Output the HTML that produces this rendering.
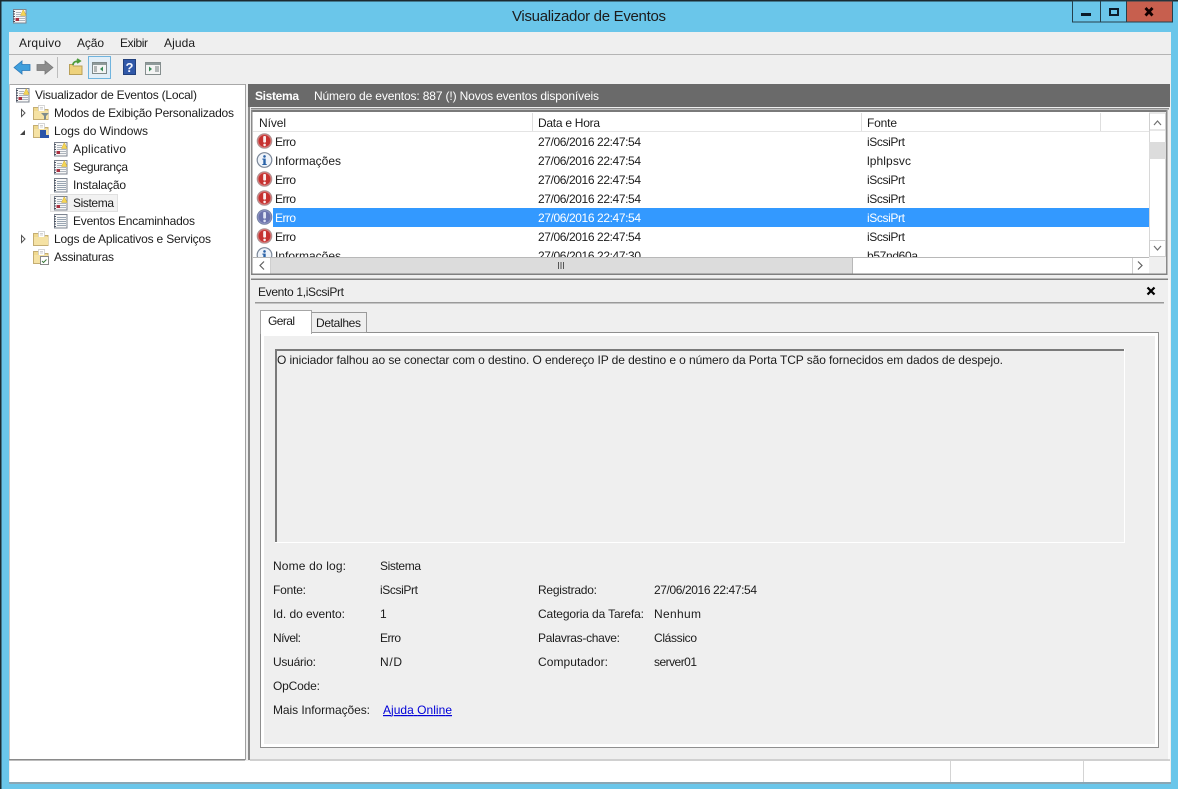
<!DOCTYPE html>
<html lang="pt"><head><meta charset="utf-8"><title>Visualizador de Eventos</title>
<style>
html,body{margin:0;padding:0;width:1178px;height:789px;overflow:hidden;background:#6ac6ea}
svg{display:block}
text{font-family:"Liberation Sans",sans-serif;font-size:12px;fill:#1c1c1c}
</style></head><body>
<svg xmlns="http://www.w3.org/2000/svg" width="1178" height="789" viewBox="0 0 1178 789">
<defs>
<clipPath id="lc"><rect x="253" y="132" width="896" height="125"/></clipPath>
<g id="err"><circle cx="8" cy="8" r="7.400" fill="#d27a7a" stroke="#a99a9a" stroke-width=".8"/><circle cx="8" cy="8" r="5.900" fill="#c63230"/><rect x="6.700" y="3" width="2.800" height="6.600" rx="1" fill="#fbeeee"/><rect x="6.800" y="10.600" width="2.600" height="2.600" rx="1.200" fill="#fbeeee"/></g>
<g id="sel"><circle cx="8" cy="8" r="7.400" fill="#8d92c0" stroke="#6f7f9f" stroke-width=".8"/><circle cx="8" cy="8" r="5.900" fill="#6a72ac"/><rect x="6.700" y="3" width="2.800" height="6.600" rx="1" fill="#dfe4f4"/><rect x="6.800" y="10.600" width="2.600" height="2.600" rx="1.200" fill="#dfe4f4"/></g>
<g id="inf"><circle cx="8" cy="8" r="7.300" fill="#eef3fa" stroke="#7b8798" stroke-width="1.200"/><circle cx="8" cy="4.400" r="1.300" fill="#2a62a8"/><rect x="6.800" y="6.600" width="2.400" height="6" fill="#2a62a8"/><rect x="5.800" y="6.600" width="2" height="1" fill="#2a62a8"/><rect x="5.800" y="12" width="4.400" height="1" fill="#2a62a8"/></g>
<g id="log"><rect x="1.500" y="1.500" width="12.500" height="13.500" fill="#f7f7f7" stroke="#7d8490"/><path d="M1 3.500h2M1 6h2M1 8.500h2M1 11h2M1 13.500h2" stroke="#4a5260"/><path d="M4 4.500h5M4 6.500h5M4 8.500h9M4 10.500h9M4 12.500h9" stroke="#adb5bd"/><path d="M8.500 7.500l2.800-6 2.800 6z" fill="#f4d655" stroke="#d0ac38" stroke-width=".5"/><rect x="3.500" y="10" width="3.500" height="3" fill="#a83040"/></g>
<g id="plain"><rect x="1.500" y="1.500" width="12.500" height="13.500" fill="#f7f7f7" stroke="#7d8490"/><path d="M1 3.500h2M1 6h2M1 8.500h2M1 11h2M1 13.500h2" stroke="#4a5260"/><path d="M4 4.500h9M4 6.500h9M4 8.500h9M4 10.500h9M4 12.500h9" stroke="#99a5b2"/></g>
<g id="fold"><path d="M.5 14.500V2.500h5l1.500 2h8v10z" fill="#f0d98e" stroke="#c4ad72"/><path d="M5.500 .5h6v6h-6z" fill="#fff" stroke="#c8c8c8" stroke-width=".7"/><path d="M7 2.500h3M7 4h3" stroke="#c4c4c4" stroke-width=".7"/><rect x="1" y="6" width="14" height="8" fill="#f5e2a4"/></g>
</defs>

<!-- frame -->
<rect width="1178" height="789" fill="#6ac6ea"/>
<rect width="1178" height="1.500" fill="#1c2a30"/>
<rect width="1.500" height="789" fill="#1c2a30"/>
<text x="512" y="21" textLength="154" style="font-size:15px">Visualizador de Eventos</text>
<g transform="translate(12,8)"><use href="#log"/></g>

<!-- caption buttons -->
<rect x="1072.500" y="1" width="28" height="21" fill="#6ac6ea" stroke="#25404c"/>
<rect x="1100.500" y="1" width="26" height="21" fill="#6ac6ea" stroke="#25404c"/>
<rect x="1126.500" y="1" width="46" height="21" fill="#c75f4e" stroke="#25404c"/>
<rect x="1081" y="13" width="10" height="3" fill="#0c1c2a"/>
<rect x="1110" y="9" width="8" height="6" fill="none" stroke="#0c1c2a" stroke-width="2"/>
<path d="M1145.500 8l7 7.500M1152.500 8l-7 7.500" stroke="#100" stroke-width="2.800"/>

<!-- client -->
<rect x="9" y="32" width="1162" height="751" fill="#efefef"/>
<rect x="9" y="54" width="1162" height="1" fill="#b4b4b4"/>
<text x="19" y="47" textLength="42">Arquivo</text>
<text x="77" y="47" textLength="27">Ação</text>
<text x="120" y="47" textLength="28">Exibir</text>
<text x="164" y="47" textLength="31">Ajuda</text>

<!-- toolbar -->
<path d="M14 67.500l8-6.500v3.500h8v6h-8v3.500z" fill="#3f9fdc" stroke="#2a78b8" stroke-width=".8"/>
<path d="M53 67.500l-8-6.500v3.500h-8v6h8v3.500z" fill="#8c8c8c" stroke="#777" stroke-width=".8"/>
<rect x="57" y="57" width="1" height="21" fill="#bdbdbd"/>
<path d="M69.500 74.500V64.500h3l1 1.500h8.500v8.500z" fill="#eed27c" stroke="#b9a058"/>
<path d="M73 65c0-3 3-4 6-4M77 59l3 2-3 2" fill="none" stroke="#4f9c3c" stroke-width="1.800"/>
<rect x="88.500" y="56.500" width="22" height="22" fill="#e2eef7" stroke="#70b4de"/>
<rect x="92.500" y="62.500" width="14" height="11" fill="#f4f4f4" stroke="#7f8a8a"/>
<rect x="93" y="63" width="13" height="2" fill="#8f9a9a"/>
<path d="M94 67h3M94 69h3M94 71h3" stroke="#6f7a7a"/><path d="M103 66.500v5l-3-2.500z" fill="#3a8a58"/>
<rect x="123.500" y="59.500" width="12" height="15" fill="#3058a8" stroke="#22407c"/>
<text x="125.500" y="72" style="font-size:13px;font-weight:bold;fill:#f4f6ff">?</text>
<rect x="145.500" y="62.500" width="15" height="12" fill="#f4f4f4" stroke="#858e8e"/>
<rect x="146" y="63" width="14" height="2" fill="#8f9a9a"/>
<path d="M155 67h4M155 69h4M155 71h4" stroke="#6f7a7a"/><path d="M149 66.500v5l3-2.500z" fill="#3a8a58"/>

<!-- tree panel -->
<rect x="10" y="84" width="235" height="675" fill="#fff"/>
<rect x="9" y="84" width="236" height="1" fill="#a8a8a8"/>
<rect x="9" y="84" width="1" height="676" fill="#c8c8c8"/>
<rect x="9" y="759" width="236" height="1.500" fill="#8a8a8a"/>
<rect x="245" y="84" width="1" height="676" fill="#a0a0a0"/>
<rect x="248" y="84" width="2" height="676" fill="#8a8a8a"/>
<g transform="translate(15,87)"><use href="#log"/></g>
<text x="35" y="99" textLength="162">Visualizador de Eventos (Local)</text>
<path d="M21.500 109.500v7l3.500-3.500z" fill="#fff" stroke="#555"/>
<g transform="translate(33,105)"><use href="#fold"/></g>
<path d="M41 113h8l-3 3v3l-2 1v-4z" fill="#7f8c8c"/>
<text x="54" y="117" textLength="180">Modos de Exibição Personalizados</text>
<path d="M20 135l5-5v5z" fill="#444"/>
<g transform="translate(33,123)"><use href="#fold"/></g>
<path d="M40 130h6v5h3v3h-9z" fill="#2a54a8"/>
<text x="54" y="135" textLength="94">Logs do Windows</text>
<g transform="translate(53,141)"><use href="#log"/></g>
<text x="73" y="153" textLength="53">Aplicativo</text>
<g transform="translate(53,159)"><use href="#log"/></g>
<text x="73" y="171" textLength="55">Segurança</text>
<g transform="translate(53,177)"><use href="#plain"/></g>
<text x="73" y="189" textLength="53">Instalação</text>
<rect x="50.500" y="194.500" width="67" height="17" fill="#f2f2f2" stroke="#e0e0e0"/>
<g transform="translate(53,195)"><use href="#log"/></g>
<text x="73" y="207" textLength="41">Sistema</text>
<g transform="translate(53,213)"><use href="#plain"/></g>
<text x="73" y="225" textLength="122">Eventos Encaminhados</text>
<path d="M21.500 235.500v7l3.500-3.500z" fill="#fff" stroke="#555"/>
<g transform="translate(33,231)"><use href="#fold"/></g>
<text x="54" y="243" textLength="157">Logs de Aplicativos e Serviços</text>
<g transform="translate(33,249)"><use href="#fold"/></g>
<rect x="40.500" y="256.500" width="8" height="8" fill="#fff" stroke="#888"/>
<path d="M42 261l1.500 1.500 3-3" fill="none" stroke="#3a7a3a"/>
<text x="54" y="261" textLength="60">Assinaturas</text>

<!-- dark header -->
<rect x="248" y="84" width="922" height="23" fill="#6a6a6a"/>
<text x="255" y="100" textLength="44" style="font-weight:bold;fill:#fff">Sistema</text>
<text x="314" y="100" textLength="285" style="fill:#fff">Número de eventos: 887 (!) Novos eventos disponíveis</text>

<!-- list -->
<rect x="251" y="108" width="918" height="1.500" fill="#8a8a8a"/>
<rect x="251" y="110" width="916" height="2.500" fill="#7a7a7a"/>
<rect x="252" y="112" width="915" height="163" fill="#fff"/>
<rect x="251" y="110" width="1.500" height="165" fill="#8a8a8a"/>
<rect x="1166" y="110" width="1.500" height="165" fill="#8a8a8a"/>
<rect x="251" y="273.500" width="916.500" height="1.500" fill="#808080"/>
<rect x="253" y="131" width="896" height="1" fill="#e4e4e4"/>
<rect x="532" y="113" width="1" height="18" fill="#dedede"/>
<rect x="861" y="113" width="1" height="18" fill="#dedede"/>
<rect x="1100" y="113" width="1" height="18" fill="#dedede"/>
<text x="259" y="127" textLength="27">Nível</text>
<text x="538" y="127" textLength="62">Data e Hora</text>
<text x="867" y="127" textLength="30">Fonte</text>
<rect x="273" y="208" width="876" height="19" fill="#3399ff"/>
<g clip-path="url(#lc)">
<g transform="translate(256.500,133)"><use href="#err"/></g>
<text x="275" y="146" textLength="21">Erro</text><text x="538" y="146" textLength="103">27/06/2016 22:47:54</text><text x="867" y="146" textLength="38">iScsiPrt</text>
<g transform="translate(256.500,152)"><use href="#inf"/></g>
<text x="275" y="165" textLength="66">Informações</text><text x="538" y="165" textLength="103">27/06/2016 22:47:54</text><text x="867" y="165" textLength="44">lphlpsvc</text>
<g transform="translate(256.500,171)"><use href="#err"/></g>
<text x="275" y="184" textLength="21">Erro</text><text x="538" y="184" textLength="103">27/06/2016 22:47:54</text><text x="867" y="184" textLength="38">iScsiPrt</text>
<g transform="translate(256.500,190)"><use href="#err"/></g>
<text x="275" y="203" textLength="21">Erro</text><text x="538" y="203" textLength="103">27/06/2016 22:47:54</text><text x="867" y="203" textLength="38">iScsiPrt</text>
<g transform="translate(256.500,209)"><use href="#sel"/></g>
<text x="275" y="222" textLength="21" style="fill:#fff">Erro</text><text x="538" y="222" textLength="103" style="fill:#fff">27/06/2016 22:47:54</text><text x="867" y="222" textLength="38" style="fill:#fff">iScsiPrt</text>
<g transform="translate(256.500,228)"><use href="#err"/></g>
<text x="275" y="241" textLength="21">Erro</text><text x="538" y="241" textLength="103">27/06/2016 22:47:54</text><text x="867" y="241" textLength="38">iScsiPrt</text>
<g transform="translate(256.500,247)"><use href="#inf"/></g>
<text x="275" y="260" textLength="66">Informações</text><text x="538" y="260" textLength="103">27/06/2016 22:47:30</text><text x="867" y="260" textLength="51">b57nd60a</text>
</g>

<!-- v scrollbar -->
<rect x="1149.500" y="113" width="16" height="144" fill="#fff" stroke="#d8d8d8"/>
<rect x="1149.500" y="113" width="16" height="17" fill="#fff" stroke="#cfcfcf"/>
<path d="M1154 125l3.500-4 3.500 4" fill="none" stroke="#707070" stroke-width="1.200"/>
<rect x="1149" y="142" width="17" height="17" fill="#dcdcdc"/>
<rect x="1149.500" y="240.500" width="16" height="16" fill="#fff" stroke="#cfcfcf"/>
<path d="M1154 246l3.500 4 3.500-4" fill="none" stroke="#707070" stroke-width="1.200"/>
<!-- h scrollbar -->
<rect x="253" y="257" width="913" height="16.500" fill="#fff"/>
<rect x="253" y="257" width="896" height="1" fill="#b8b8b8"/>
<rect x="270" y="258" width="582" height="15.500" fill="#dcdcdc"/>
<rect x="852" y="258" width="1" height="15.500" fill="#b8b8b8"/>
<rect x="270" y="258" width="1" height="15.500" fill="#cfcfcf"/>
<path d="M264 261.500l-4 4 4 4" fill="none" stroke="#606060" stroke-width="1.200"/>
<rect x="1132" y="258" width="17" height="15.500" fill="#fff"/><rect x="1132" y="258" width="1" height="15.500" fill="#cfcfcf"/>
<rect x="1149" y="257" width="17" height="16.500" fill="#efefef"/>
<path d="M1138 261.500l4 4-4 4" fill="none" stroke="#606060" stroke-width="1.200"/>
<path d="M558.500 262v7M561 262v7M563.500 262v7" stroke="#555"/>

<!-- detail -->
<rect x="251" y="278.500" width="917" height="1.500" fill="#808080"/>
<rect x="1168" y="280" width="2" height="480" fill="#fafafa"/>
<text x="258" y="296" textLength="86">Evento 1,iScsiPrt</text>
<path d="M1147.500 287.500l7 7M1154.500 287.500l-7 7" stroke="#000" stroke-width="2.200"/>
<rect x="255" y="302" width="909" height="1.500" fill="#9a9a9a"/>

<!-- tab panel -->
<rect x="260" y="332" width="899" height="416" fill="#fff"/>
<rect x="264" y="336" width="891" height="408" fill="#efefef"/>
<rect x="260.500" y="332.500" width="898" height="415" fill="none" stroke="#8f8f8f"/>
<rect x="311.500" y="312.500" width="55" height="20" fill="#efefef" stroke="#9a9a9a"/>
<rect x="260.500" y="310.500" width="51" height="23" fill="#fff" stroke="#a6a6a6"/>
<rect x="261" y="331" width="50" height="5" fill="#fff"/>
<text x="268" y="325" textLength="27">Geral</text>
<text x="316" y="327" textLength="45">Detalhes</text>

<!-- text box -->
<rect x="275" y="349" width="850" height="194" fill="#fff"/>
<rect x="276" y="351" width="848" height="191" fill="#efefef"/>
<rect x="275" y="349" width="849" height="2" fill="#7a7a7a"/>
<rect x="275" y="349" width="2" height="193" fill="#7a7a7a"/>
<text x="277" y="364" textLength="726">O iniciador falhou ao se conectar com o destino. O endereço IP de destino e o número da Porta TCP são fornecidos em dados de despejo.</text>

<!-- fields -->
<text x="273" y="570" textLength="73">Nome do log:</text><text x="380" y="570" textLength="41">Sistema</text>
<text x="273" y="594" textLength="33">Fonte:</text><text x="380" y="594" textLength="38">iScsiPrt</text>
<text x="538" y="594" textLength="59">Registrado:</text><text x="654" y="594" textLength="103">27/06/2016 22:47:54</text>
<text x="273" y="618" textLength="72">Id. do evento:</text><text x="380" y="618">1</text>
<text x="538" y="618" textLength="106">Categoria da Tarefa:</text><text x="654" y="618" textLength="47">Nenhum</text>
<text x="273" y="642" textLength="28">Nível:</text><text x="380" y="642" textLength="21">Erro</text>
<text x="538" y="642" textLength="82">Palavras-chave:</text><text x="654" y="642" textLength="43">Clássico</text>
<text x="273" y="666" textLength="43">Usuário:</text><text x="380" y="666" textLength="22">N/D</text>
<text x="538" y="666" textLength="70">Computador:</text><text x="654" y="666" textLength="43">server01</text>
<text x="273" y="690" textLength="47">OpCode:</text>
<text x="273" y="714" textLength="97">Mais Informações:</text>
<text x="383" y="714" textLength="69" style="fill:#0000d8;text-decoration:underline">Ajuda Online</text>

<!-- status bar -->
<rect x="10" y="761" width="1160" height="21" fill="#fff"/>
<rect x="250" y="759.500" width="920" height="1" fill="#b0b0b0"/>
<rect x="950" y="761" width="1" height="21" fill="#d4d4d4"/>
<rect x="1083" y="761" width="1" height="21" fill="#d4d4d4"/>
<rect x="9" y="782" width="1162" height="2" fill="#8aa6b4"/>
</svg>
</body></html>
